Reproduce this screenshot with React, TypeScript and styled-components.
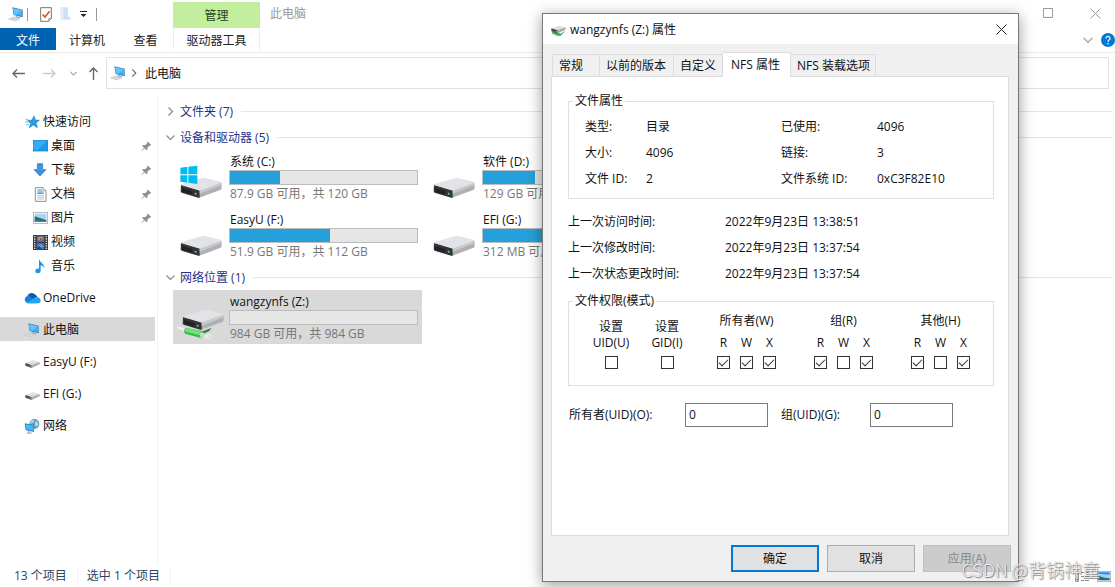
import React from "react";
import styled, { createGlobalStyle, css } from "styled-components";

const Global = createGlobalStyle`
  * { box-sizing: border-box; }
  body {
    margin: 0;
    overflow: hidden;
    background: #fff;
    color: #111;
    font: 12px/16px "Open Sans", "Noto Sans CJK SC", sans-serif;
  }
  button, input { font: inherit; color: inherit; }
  svg { display: block; flex: none; }
`;

/* ---------- explorer frame ---------- */

const Explorer = styled.div`
  position: relative;
  display: flex;
  flex-direction: column;
  height: 100vh;
  min-height: 560px;
`;

const TitleBar = styled.header`
  display: flex;
  align-items: center;
  height: 28px;
  padding: 0 14px 0 8px;
`;

const QuickTools = styled.div`
  display: flex;
  align-items: center;
  width: 165px;
`;

const IconButton = styled.button<{ $gap?: number; $tone?: string }>`
  display: flex;
  align-items: center;
  justify-content: center;
  margin: 0 0 0 ${(p) => p.$gap ?? 0}px;
  padding: 0;
  border: 0;
  background: none;
  color: ${(p) => p.$tone ?? "#666"};
`;

const ToolDivider = styled.span<{ $gap: number }>`
  width: 1px;
  height: 13px;
  margin-left: ${(p) => p.$gap}px;
  background: #999;
`;

const ManageTab = styled.div`
  align-self: flex-end;
  width: 87px;
  height: 26px;
  line-height: 27px;
  text-align: center;
  background: #c1ef9d;
  color: #2b3d1c;
`;

const WindowTitle = styled.span`
  flex: 1;
  padding-left: 10px;
  color: #999;
`;

const WindowControls = styled.div`
  display: flex;
  align-items: center;
  gap: 36px;
  padding-bottom: 2px;
`;

const Ribbon = styled.nav`
  display: flex;
  align-items: center;
  height: 25px;
  padding-bottom: 2px;
  border-bottom: 1px solid #e9e9e9;
`;

const RibbonTab = styled.button<{ $width: number; $kind?: "file" | "tools" }>`
  width: ${(p) => p.$width}px;
  height: 22px;
  padding: 3px 0 0;
  border: 0;
  background: none;
  color: #222;
  white-space: nowrap;
  ${(p) => p.$kind === "file" && css`background: #0063b1; color: #fff;`}
  ${(p) => p.$kind === "tools" && css`
    border: solid #ececec;
    border-width: 0 1px;
  `}
`;

const RibbonEnd = styled.div`
  display: flex;
  flex: 1;
  align-items: center;
  justify-content: flex-end;
  padding-top: 2px;
`;

const AddressRow = styled.div`
  display: flex;
  align-items: center;
  height: 40px;
  padding: 0 6px 0 12px;
`;

const AddressBox = styled.div`
  display: flex;
  flex: 1;
  align-items: center;
  height: 32px;
  margin-left: 6px;
  padding-left: 3px;
  border: 1px solid #e2e2e2;
  color: #666;
`;

const AddressText = styled.span`
  padding: 1px 0 0 7px;
  color: #111;
`;

const Main = styled.div`
  display: flex;
  flex: 1;
  min-height: 0;
`;

/* ---------- navigation pane ---------- */

const NavPane = styled.nav`
  width: 158px;
  margin-top: 3px;
  padding: 13px 2px 0 0;
  border-right: 1px solid #f2f2f2;
`;

const NavItem = styled.a<{ $child?: boolean; $current?: boolean; $spaced?: boolean }>`
  display: flex;
  align-items: center;
  height: 24px;
  margin-top: ${(p) => (p.$spaced ? 8 : 0)}px;
  padding: 2px 3px 0 ${(p) => (p.$child ? 32 : 24)}px;
  background: ${(p) => (p.$current ? "#d9d9d9" : "transparent")};
  color: #111;
  text-decoration: none;
`;

const NavIcon = styled.span`
  display: flex;
  width: 16px;
  justify-content: center;
  margin-right: 3px;
`;

const NavLabel = styled.span`
  flex: 1;
`;

/* ---------- file list ---------- */

const Content = styled.main`
  flex: 1;
  min-width: 0;
  padding: 5px 3px 0 8px;
`;

const GroupHead = styled.h2`
  display: flex;
  align-items: center;
  height: 26px;
  margin: 0;
  padding-top: 1px;
  font-size: 12px;
  font-weight: 400;
  color: #1e3287;
  white-space: nowrap;

  &::after {
    content: "";
    flex: 1;
    height: 1px;
    margin-left: 8px;
    background: #e5e5e5;
  }
`;

const GroupToggle = styled.button`
  display: flex;
  width: 14px;
  padding: 0;
  border: 0;
  background: none;
  color: #888;
`;

const Tiles = styled.div`
  display: grid;
  grid-template-columns: repeat(2, 249px);
  gap: 4px;
  padding: 0 0 2px 7px;
`;

const Tile = styled.article<{ $selected?: boolean }>`
  display: flex;
  height: 54px;
  background: ${(p) => (p.$selected ? "#d9d9d9" : "transparent")};
`;

const TileBody = styled.div`
  flex: 1;
  padding: 3px 4px 0 0;
  white-space: nowrap;
`;

const TileName = styled.div`
  padding-left: 1px;
  line-height: 17px;
`;

const TileInfo = styled.div`
  padding-left: 1px;
  line-height: 17px;
  color: #777;
`;

const UsageBar = styled.div`
  height: 15px;
  border: 1px solid #bcbcbc;
  background: #e6e6e6;
`;

const UsageFill = styled.div`
  height: 100%;
  background: #26a0da;
`;

const StatusBar = styled.footer`
  display: flex;
  align-items: center;
  height: 23px;
  padding: 1px 4px 0 14px;
  color: #2c4566;
`;

const StatusText = styled.span`
  margin-right: 9px;
  padding-right: 10px;
  border-right: 1px solid #f0f0f0;
`;

const ViewButtons = styled.div`
  display: flex;
  flex: 1;
  justify-content: flex-end;
  gap: 7px;
`;

/* ---------- properties dialog ---------- */

const Dialog = styled.section`
  position: absolute;
  top: 13px;
  left: 542px;
  display: flex;
  flex-direction: column;
  width: 477px;
  height: 569px;
  border: 1px solid #777;
  background: #f0f0f0;
  box-shadow: 0 3px 14px rgba(0, 0, 0, 0.4);
`;

const DialogTitle = styled.header`
  display: flex;
  align-items: center;
  gap: 4px;
  height: 30px;
  padding: 1px 11px 0 8px;
  background: #fff;
`;

const DialogName = styled.h1`
  flex: 1;
  margin: 0;
  font-size: 12px;
  font-weight: 400;
`;

const TabList = styled.div`
  display: flex;
  align-items: flex-end;
  height: 32px;
  padding: 0 9px;
`;

const Tab = styled.button<{ $width: number; $active?: boolean }>`
  width: ${(p) => p.$width}px;
  height: 22px;
  padding: 1px 6px 0;
  border: 1px solid #dcdcdc;
  border-width: 1px 1px 0 0;
  background: #f0f0f0;
  text-align: left;
  white-space: nowrap;

  &:first-child { border-left-width: 1px; }

  ${(p) => p.$active && css`
    z-index: 1;
    height: 25px;
    margin-bottom: -1px;
    padding: 0 8px;
    background: #fff;
  `}
`;

const Panel = styled.div`
  flex: 1;
  margin: 0 9px 0 8px;
  padding: 16px 14px 0 16px;
  border: 1px solid #dcdcdc;
  background: #fff;
`;

const Group = styled.fieldset`
  margin: 0;
  padding: 0 4px;
  border: 1px solid #dfdfdf;
`;

const GroupName = styled.legend`
  padding: 0 2px;
`;

const Facts = styled.dl`
  display: grid;
  grid-template-columns: 61px 135px 96px 1fr;
  row-gap: 10px;
  margin: 0;
  padding: 10px 0 11px 12px;
`;

const Times = styled.dl`
  display: grid;
  grid-template-columns: 157px 1fr;
  row-gap: 10px;
  margin: 15px 0 11px;
`;

const Term = styled.dt`
  white-space: nowrap;
`;

const Value = styled.dd`
  margin: 0;
`;

const Permissions = styled.div`
  display: flex;
  align-items: flex-end;
  height: 76px;
  padding: 0 14px 16px 10px;
`;

const FlagLabel = styled.label`
  display: flex;
  flex-direction: column;
  align-items: center;
  width: 56px;
  text-align: center;
`;

const ModeGroups = styled.div`
  display: flex;
  flex: 1;
  justify-content: flex-end;
  gap: 28px;
`;

const ModeGroup = styled.div`
  display: flex;
  flex-direction: column;
  align-items: center;
  gap: 6px;
`;

const ModeBoxes = styled.div`
  display: grid;
  grid-template-columns: repeat(3, 23px);
`;

const ModeLabel = styled.label`
  display: flex;
  flex-direction: column;
  align-items: center;
`;

const Check = styled.input.attrs({ type: "checkbox" })`
  appearance: none;
  display: grid;
  place-content: center;
  width: 13px;
  height: 13px;
  margin: 5px 0 0;
  border: 1px solid #333;
  background: #fff;

  &:checked::after {
    content: "";
    width: 8px;
    height: 4px;
    margin-bottom: 2px;
    border: solid #333;
    border-width: 0 0 1px 1px;
    transform: rotate(-45deg);
  }
`;

const OwnerRow = styled.div`
  display: grid;
  grid-template-columns: 116px 96px 89px 83px;
  align-items: center;
  margin-top: 17px;
  padding-left: 1px;
`;

const IdInput = styled.input`
  width: 83px;
  height: 24px;
  padding: 0 3px 2px;
  border: 1px solid #7a7a7a;
  background: #fff;
`;

const Actions = styled.footer`
  display: flex;
  justify-content: flex-end;
  gap: 8px;
  padding: 9px 7px;
`;

const ActionButton = styled.button<{ $primary?: boolean }>`
  width: 88px;
  height: 27px;
  padding: 0;
  border: ${(p) => (p.$primary ? "2px solid #0078d7" : "1px solid #adadad")};
  background: #e1e1e1;

  &:disabled {
    border-color: #bfbfbf;
    background: #ccc;
    color: #888;
  }
`;

const Watermark = styled.div`
  position: absolute;
  right: 15px;
  bottom: 5px;
  font: 300 18px/26px "Noto Sans CJK SC", sans-serif;
  color: #f0f0f0;
  text-shadow: 1px 1px 1px #777, 0 0 1px #999;
  pointer-events: none;
  white-space: nowrap;
`;

/* ---------- icons ---------- */

const PcIcon = () => (
  <svg width="16" height="16" viewBox="0 0 48 48">
    <path d="M13 4 44 11V34L17 27z" fill="#2d7db4" />
    <path d="M15 7 42 13V31L19 25z" fill="#3fb0f5" />
    <path d="M15 7 42 13 24 26 19 25z" fill="#63c3ff" />
    <path d="M22 29 36 33 38 37 24 36z" fill="#9fb3c1" />
    <path d="M1 39 15 33 36 38 21 45z" fill="#e3e8ec" stroke="#b5bfc7" strokeWidth="1.5" />
    <path d="M7 39 17 35M12 41 23 36M18 43 29 38" stroke="#a8b3bb" strokeWidth="1.5" />
  </svg>
);

const DriveShape = () => (
  <>
    <path d="M25 103 Q24 106 24 124 Q24 127 27 128 L77 143 Q80 144 83 142 L143 119 Q146 117 146 113 L145 98 79 122z" fill="#aeb0b3" />
    <path d="M24 105 80 121 80 143 Q78 144 76 143 L26 128 Q23 127 23 124z" fill="#333638" />
    <path d="M24 105 Q24 103 27 102 L88 84 Q92 83 96 84 L143 95 Q147 97 143 99 L84 121 Q80 122 76 121z" fill="#e2e3e6" />
    <path d="M80 122 145 98 146 105 80 131z" fill="#c8cacd" />
    <path d="M27 114 58 123v11L27 125z" fill="#202224" />
    <circle cx="68" cy="131" r="3" fill="#4fe34a" />
  </>
);

type DriveKind = "plain" | "system" | "network";

const TileIcon = ({ kind }: { kind: DriveKind }) => (
  <svg width="56" height="54" viewBox="0 0 168 162">
    {kind === "network" && (
      <>
        <path d="M17 113 38 121M90 140 110 138" stroke="#eef0f1" strokeWidth="8" strokeLinecap="round" />
        <path d="M38 113 Q30 122 36 131 L86 145 Q95 140 90 124z" fill="#3dbb4c" />
        <path d="M40 114 Q34 119 36 124 L86 137 92 126z" fill="#72e07a" />
        <path d="M84 126 116 113 108 124 90 132z" fill="#258c35" />
        <ellipse cx="88" cy="136" rx="7" ry="9" fill="#c9d8cc" />
        <circle cx="108" cy="139" r="6" fill="#d9d9d9" stroke="#f3f3f3" strokeWidth="3" />
      </>
    )}
    <g transform={kind === "network" ? "translate(6 -24)" : undefined}>
      <DriveShape />
    </g>
    {kind === "system" && (
      <path d="M22 53 43 50V73H22zM46 50 73 47V73H46zM22 76H43V98L22 95zM46 76H73V102L46 98z" fill="#00bcf2" />
    )}
  </svg>
);

const SmallDrive = ({ network }: { network?: boolean }) => (
  <svg width="15" height="15" viewBox="0 0 45 45">
    {network && <path d="M4 27 30 36 40 29 28 41 18 40 4 34z" fill="#35b34a" stroke="#35b34a" strokeWidth="2" />}
    <g transform={network ? "translate(0 -5)" : undefined}>
      <path d="M1 24 24 16 44 21 20 30z" fill="#dedfe1" />
      <path d="M1 24 20 30V39L1 32z" fill="#4a4d50" />
      <path d="M20 30 44 21V28L20 39z" fill="#a9abae" />
      <circle cx="15" cy="33" r="2" fill="#50d050" />
    </g>
  </svg>
);

const StarIcon = () => (
  <svg width="15" height="14" viewBox="0 0 45 42">
    <path d="M27 3 31 15 43 16 33 24 37 38 25 30 13 38 17 25 8 17 21 15z" fill="#2a9be5" stroke="#2584c8" strokeWidth="2" />
    <path d="M2 14H10M1 21H10M4 29H12" stroke="#5fb8f0" strokeWidth="3" />
  </svg>
);

const DesktopIcon = () => (
  <svg width="15" height="12" viewBox="0 0 45 36">
    <rect x="1" y="1" width="43" height="32" fill="#1b9bf0" stroke="#1573b9" strokeWidth="2" />
    <path d="M2 2H43L14 30H2z" fill="#36adfa" />
  </svg>
);

const DownloadIcon = () => (
  <svg width="14" height="14" viewBox="0 0 42 42">
    <path d="M13 2H29V20H39L21 39 3 20H13z" fill="#3f93e2" stroke="#2b76bd" strokeWidth="2" />
  </svg>
);

const DocumentIcon = () => (
  <svg width="13" height="15" viewBox="0 0 39 45">
    <path d="M4 2H27L36 11V43H4z" fill="#fff" stroke="#8d9296" strokeWidth="3" />
    <path d="M27 2V11H36" fill="#e3e7ea" stroke="#8d9296" strokeWidth="2" />
    <path d="M10 9H24M10 15H29M10 19H29" stroke="#2c96d5" strokeWidth="3" />
    <path d="M10 26H30M10 31H30M10 36H30" stroke="#9cabb5" strokeWidth="2" />
  </svg>
);

const PictureIcon = () => (
  <svg width="15" height="12" viewBox="0 0 45 36">
    <rect x="1" y="1" width="43" height="33" fill="#fff" stroke="#9a9a9a" strokeWidth="2" />
    <rect x="5" y="5" width="35" height="25" fill="#a6d5f7" />
    <path d="M5 13 18 17 40 24V30H5z" fill="#2d6b66" />
    <path d="M5 24 40 27V30H5z" fill="#3f83b9" />
  </svg>
);

const VideoIcon = () => (
  <svg width="15" height="15" viewBox="0 0 45 45">
    <rect width="45" height="45" fill="#3a3a3a" />
    <path d="M5 3V43M40 3V43" stroke="#ddd" strokeWidth="4" strokeDasharray="4 3" />
    <path d="M11 2H34V21H11zM11 24H34V43H11z" fill="#3b6fc4" />
    <path d="M18 5H27L31 12 23 19 14 13z" fill="#d69a2e" />
    <path d="M21 8 29 13 22 18z" fill="#c23c2c" />
    <path d="M14 31 24 27 32 34 22 41z" fill="#5b9fe6" />
    <path d="M12 38 20 33 26 42H12z" fill="#254789" />
  </svg>
);

const MusicIcon = () => (
  <svg width="11" height="15" viewBox="0 0 33 45">
    <path d="M14 2C15 12 30 14 28 28 26 21 20 19 17 19V35A8 7 0 1 1 12 29V2z" fill="#1598e8" />
  </svg>
);

const CloudIcon = () => (
  <svg width="17" height="12" viewBox="0 0 51 36">
    <path d="M11 31A10 10 0 0 1 10 13 14 14 0 0 1 36 11L40 16 25 31z" fill="#0f65bd" />
    <path d="M17 11A14 14 0 0 1 36 10L40 15 29 20z" fill="#0a56a8" />
    <path d="M5 29A10 10 0 0 1 16 13L42 30 38 34H11Q7 33 5 29z" fill="#1683d9" />
    <path d="M27 21Q31 14 39 15 50 17 50 26 49 34 41 34H12L8 32z" fill="#29a5ee" />
  </svg>
);

const NetworkIcon = () => (
  <svg width="16" height="16" viewBox="0 0 48 48">
    <circle cx="31" cy="18" r="15" fill="#5f9cb8" />
    <path d="M20 9Q27 4 31 8L26 15 19 17zM34 10Q43 11 43 20L38 27 32 21z" fill="#b9d7e0" />
    <path d="M2 16 30 21V42L5 37z" fill="#2b86cc" />
    <path d="M5 19 28 23V39L7 34z" fill="#4bb6fa" />
    <path d="M14 38V43M9 45H23" stroke="#7897aa" strokeWidth="3" />
  </svg>
);

const PinIcon = () => (
  <svg width="11" height="11" viewBox="0 0 33 33">
    <path d="M20 2 31 12 27 14 24 15 19 21 19 27 16 28 11 22 3 30 2 29 9 20 4 15 6 12 12 13 18 8 18 4z" fill="#87929b" />
  </svg>
);

const Chevron = ({ dir, size = 9 }: { dir: "right" | "down"; size?: number }) => (
  <svg width={size} height={size} viewBox="0 0 9 9" fill="none" stroke="currentColor" strokeWidth="1.2">
    <path d={dir === "right" ? "M2.5 0.5 6.5 4.5 2.5 8.5" : "M0.5 2.5 4.5 6.5 8.5 2.5"} />
  </svg>
);

const ArrowIcon = ({ dir }: { dir: "left" | "right" | "up" }) => (
  <svg width="13" height="13" viewBox="0 0 13 13" fill="none" stroke="currentColor" strokeWidth="1.4">
    {dir === "left" && <path d="M5 2.5 1 6.5 5 10.5M1 6.5H13" />}
    {dir === "right" && <path d="M8 2.5 12 6.5 8 10.5M12 6.5H0" />}
    {dir === "up" && <path d="M2.5 5 6.5 1 10.5 5M6.5 1V13" />}
  </svg>
);

const CloseIcon = () => (
  <svg width="11" height="11" viewBox="0 0 11 11" fill="none" stroke="currentColor">
    <path d="M0.5 0.5 10.5 10.5M10.5 0.5 0.5 10.5" />
  </svg>
);

/* ---------- data ---------- */

const navItems: {
  label: string;
  icon: React.ReactNode;
  child?: boolean;
  pinned?: boolean;
  current?: boolean;
  spaced?: boolean;
}[] = [
  { label: "快速访问", icon: <StarIcon /> },
  { label: "桌面", icon: <DesktopIcon />, child: true, pinned: true },
  { label: "下载", icon: <DownloadIcon />, child: true, pinned: true },
  { label: "文档", icon: <DocumentIcon />, child: true, pinned: true },
  { label: "图片", icon: <PictureIcon />, child: true, pinned: true },
  { label: "视频", icon: <VideoIcon />, child: true },
  { label: "音乐", icon: <MusicIcon />, child: true },
  { label: "OneDrive", icon: <CloudIcon />, spaced: true },
  { label: "此电脑", icon: <PcIcon />, spaced: true, current: true },
  { label: "EasyU (F:)", icon: <SmallDrive />, spaced: true },
  { label: "EFI (G:)", icon: <SmallDrive />, spaced: true },
  { label: "网络", icon: <NetworkIcon />, spaced: true },
];

interface DriveInfo {
  name: string;
  info: string;
  used: number;
  kind?: DriveKind;
  selected?: boolean;
}

const drives: DriveInfo[] = [
  { name: "系统 (C:)", info: "87.9 GB 可用，共 120 GB", used: 26.5, kind: "system" },
  { name: "软件 (D:)", info: "129 GB 可用，共 180 GB", used: 28 },
  { name: "EasyU (F:)", info: "51.9 GB 可用，共 112 GB", used: 53.5 },
  { name: "EFI (G:)", info: "312 MB 可用，共 996 MB", used: 69 },
];

const facts = [
  ["类型:", "目录"],
  ["已使用:", "4096"],
  ["大小:", "4096"],
  ["链接:", "3"],
  ["文件 ID:", "2"],
  ["文件系统 ID:", "0xC3F82E10"],
];

const times = [
  ["上一次访问时间:", "2022年9月23日 13:38:51"],
  ["上一次修改时间:", "2022年9月23日 13:37:54"],
  ["上一次状态更改时间:", "2022年9月23日 13:37:54"],
];

const modes = [
  { name: "所有者(W)", bits: [true, true, true] },
  { name: "组(R)", bits: [true, false, true] },
  { name: "其他(H)", bits: [true, false, true] },
];

const tabs = [
  { label: "常规", width: 48 },
  { label: "以前的版本", width: 74 },
  { label: "自定义", width: 49 },
  { label: "NFS 属性", width: 68, active: true },
  { label: "NFS 装载选项", width: 85 },
];

const DriveTile = ({ name, info, used, kind = "plain", selected }: DriveInfo) => (
  <Tile $selected={selected}>
    <TileIcon kind={kind} />
    <TileBody>
      <TileName>{name}</TileName>
      <UsageBar>
        <UsageFill style={{ width: `${used}%` }} />
      </UsageBar>
      <TileInfo>{info}</TileInfo>
    </TileBody>
  </Tile>
);

const GroupHeader = ({ label, open }: { label: string; open?: boolean }) => (
  <GroupHead>
    <GroupToggle aria-label={label}>
      <Chevron dir={open ? "down" : "right"} />
    </GroupToggle>
    {label}
  </GroupHead>
);

const PropertiesDialog = () => (
  <Dialog role="dialog" aria-label="wangzynfs (Z:) 属性">
    <DialogTitle>
      <SmallDrive network />
      <DialogName>wangzynfs (Z:) 属性</DialogName>
      <IconButton $tone="#222" aria-label="关闭">
        <CloseIcon />
      </IconButton>
    </DialogTitle>
    <TabList role="tablist">
      {tabs.map((t) => (
        <Tab key={t.label} role="tab" aria-selected={!!t.active} $width={t.width} $active={t.active}>
          {t.label}
        </Tab>
      ))}
    </TabList>
    <Panel role="tabpanel">
      <Group>
        <GroupName>文件属性</GroupName>
        <Facts>
          {facts.map(([k, v]) => (
            <React.Fragment key={k}>
              <Term>{k}</Term>
              <Value>{v}</Value>
            </React.Fragment>
          ))}
        </Facts>
      </Group>
      <Times>
        {times.map(([k, v]) => (
          <React.Fragment key={k}>
            <Term>{k}</Term>
            <Value>{v}</Value>
          </React.Fragment>
        ))}
      </Times>
      <Group>
        <GroupName>文件权限(模式)</GroupName>
        <Permissions>
          <FlagLabel>
            设置
            <br />
            UID(U)
            <Check />
          </FlagLabel>
          <FlagLabel>
            设置
            <br />
            GID(I)
            <Check />
          </FlagLabel>
          <ModeGroups>
            {modes.map((m) => (
              <ModeGroup key={m.name} role="group" aria-label={m.name}>
                <span>{m.name}</span>
                <ModeBoxes>
                  {["R", "W", "X"].map((bit, i) => (
                    <ModeLabel key={bit}>
                      {bit}
                      <Check defaultChecked={m.bits[i]} />
                    </ModeLabel>
                  ))}
                </ModeBoxes>
              </ModeGroup>
            ))}
          </ModeGroups>
        </Permissions>
      </Group>
      <OwnerRow>
        <label htmlFor="owner-uid">所有者(UID)(O):</label>
        <IdInput id="owner-uid" defaultValue="0" />
        <label htmlFor="group-uid">组(UID)(G):</label>
        <IdInput id="group-uid" defaultValue="0" />
      </OwnerRow>
    </Panel>
    <Actions>
      <ActionButton $primary>确定</ActionButton>
      <ActionButton>取消</ActionButton>
      <ActionButton disabled>应用(A)</ActionButton>
    </Actions>
  </Dialog>
);

export default function App() {
  return (
    <>
      <Global />
      <Explorer>
        <TitleBar>
          <QuickTools>
            <PcIcon />
            <ToolDivider $gap={3} />
            <IconButton $gap={12} aria-label="属性">
              <svg width="12" height="15" viewBox="0 0 36 45">
                <path d="M2 2H34V34L26 43H2z" fill="#fff" stroke="#777" strokeWidth="3" />
                <path d="M34 34H26V43" fill="none" stroke="#777" strokeWidth="2" />
                <path d="M8 23 15 30 29 13" fill="none" stroke="#e2571d" strokeWidth="5" />
              </svg>
            </IconButton>
            <IconButton $gap={8} aria-label="新建文件夹">
              <svg width="11" height="14" viewBox="0 0 33 42">
                <path d="M2 1H24V29H31V38H8L2 41z" fill="#cfe0f2" />
                <path d="M2 1 10 4V39L2 41z" fill="#e4eef8" />
              </svg>
            </IconButton>
            <IconButton $gap={9} $tone="#222" aria-label="自定义快速访问工具栏">
              <svg width="7" height="6" viewBox="0 0 7 6" fill="currentColor">
                <path d="M0 0H7V1H0zM0.5 3H6.5L3.5 6z" />
              </svg>
            </IconButton>
            <ToolDivider $gap={9} />
          </QuickTools>
          <ManageTab>管理</ManageTab>
          <WindowTitle>此电脑</WindowTitle>
          <WindowControls>
            <IconButton $tone="#999" aria-label="最小化">
              <svg width="11" height="11" viewBox="0 0 11 11" stroke="currentColor">
                <path d="M0 5.5H10" />
              </svg>
            </IconButton>
            <IconButton $tone="#999" aria-label="最大化">
              <svg width="11" height="11" viewBox="0 0 11 11" fill="none" stroke="currentColor">
                <path d="M0.5 0.5H9.5V9.5H0.5z" />
              </svg>
            </IconButton>
            <IconButton $tone="#999" aria-label="关闭">
              <CloseIcon />
            </IconButton>
          </WindowControls>
        </TitleBar>

        <Ribbon>
          <RibbonTab $width={56} $kind="file">文件</RibbonTab>
          <RibbonTab $width={62}>计算机</RibbonTab>
          <RibbonTab $width={55}>查看</RibbonTab>
          <RibbonTab $width={87} $kind="tools">驱动器工具</RibbonTab>
          <RibbonEnd>
            <IconButton $tone="#aaa" aria-label="展开功能区">
              <Chevron dir="down" size={10} />
            </IconButton>
            <IconButton $gap={8} aria-label="帮助">
              <svg width="14" height="14" viewBox="0 0 14 14">
                <circle cx="7" cy="7" r="7" fill="#0078d7" />
                <path d="M5 5.5A2 2 0 1 1 7.8 7.2Q7 7.6 7 8.8" fill="none" stroke="#fff" strokeWidth="1.2" />
                <circle cx="7" cy="10.7" r="0.8" fill="#fff" />
              </svg>
            </IconButton>
          </RibbonEnd>
        </Ribbon>

        <AddressRow>
          <IconButton aria-label="后退">
            <ArrowIcon dir="left" />
          </IconButton>
          <IconButton $gap={18} $tone="#ccc" aria-label="前进">
            <ArrowIcon dir="right" />
          </IconButton>
          <IconButton $gap={14} aria-label="最近位置">
            <Chevron dir="down" size={7} />
          </IconButton>
          <IconButton $gap={10} aria-label="向上">
            <ArrowIcon dir="up" />
          </IconButton>
          <AddressBox>
            <PcIcon />
            <IconButton $gap={4} aria-label="此电脑">
              <Chevron dir="right" size={8} />
            </IconButton>
            <AddressText>此电脑</AddressText>
          </AddressBox>
        </AddressRow>

        <Main>
          <NavPane>
            {navItems.map((n) => (
              <NavItem key={n.label} href="#" $child={n.child} $current={n.current} $spaced={n.spaced}>
                <NavIcon>{n.icon}</NavIcon>
                <NavLabel>{n.label}</NavLabel>
                {n.pinned && <PinIcon />}
              </NavItem>
            ))}
          </NavPane>
          <Content>
            <GroupHeader label="文件夹 (7)" />
            <GroupHeader label="设备和驱动器 (5)" open />
            <Tiles>
              {drives.map((d) => (
                <DriveTile key={d.name} {...d} />
              ))}
            </Tiles>
            <GroupHeader label="网络位置 (1)" open />
            <Tiles>
              <DriveTile name="wangzynfs (Z:)" info="984 GB 可用，共 984 GB" used={0} kind="network" selected />
            </Tiles>
          </Content>
        </Main>

        <StatusBar>
          <StatusText>13 个项目</StatusText>
          <StatusText>选中 1 个项目</StatusText>
          <ViewButtons>
            <IconButton aria-label="详细信息">
              <svg width="15" height="11" viewBox="0 0 15 11">
                <path d="M0.5 0.5H3.5V10.5H0.5z" fill="#fff" stroke="#999" />
                <path d="M6 1.5H9M10 1.5H14M6 5.5H9M10 5.5H14M6 9.5H9M10 9.5H14" stroke="#888" />
                <path d="M1.5 8H3V9.5H1.5z" fill="#c33" />
              </svg>
            </IconButton>
            <IconButton aria-label="大图标">
              <svg width="14" height="11" viewBox="0 0 42 33">
                <rect x="1" y="1" width="40" height="31" fill="#fff" stroke="#999" strokeWidth="2" />
                <path d="M4 4H38V28H4z" fill="#9fd2f8" />
                <path d="M4 4H38V11L4 8z" fill="#2e8be8" />
                <path d="M4 14 22 20 38 22V28H4z" fill="#2c6a6e" />
              </svg>
            </IconButton>
          </ViewButtons>
        </StatusBar>

        <PropertiesDialog />
        <Watermark>CSDN @背锅神童</Watermark>
      </Explorer>
    </>
  );
}
